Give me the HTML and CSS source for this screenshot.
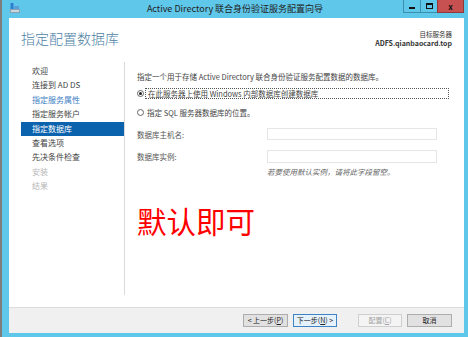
FILE: index.html
```html
<!DOCTYPE html>
<html lang="zh-CN">
<head>
    <meta charset="UTF-8">
    <title>Active Directory 联合身份验证服务配置向导</title>
    <link rel="stylesheet" href="styles.css">
</head>
<body>
    <div class="window">
        <!-- Title bar -->
        <div class="titlebar">
            <div class="tb-left">
                <svg class="app-icon" width="10" height="10" viewBox="0 0 10 10">
                    <rect x="0.5" y="0" width="3" height="7" fill="#2f7fd0"/>
                    <rect x="0" y="6" width="10" height="4" fill="#8aa2b5"/>
                    <rect x="1" y="7" width="8" height="2" fill="#c8d6e0"/>
                    <rect x="4" y="3" width="5" height="3" fill="#5a9fd8"/>
                </svg>
            </div>
            <div class="title">Active Directory 联合身份验证服务配置向导</div>
            <div class="controls">
                <span class="ctl min"><i></i></span>
                <span class="ctl max"><i></i></span>
                <span class="ctl close">x</span>
            </div>
        </div>

        <div class="client">
            <!-- Page header -->
            <div class="page-head">
                <h1>指定配置数据库</h1>
                <div class="target">
                    <div>目标服务器</div>
                    <div class="server">ADFS.qianbaocard.top</div>
                </div>
            </div>

            <div class="page-body">
                <!-- Wizard steps -->
                <ul class="steps">
                    <li>欢迎</li>
                    <li>连接到 AD DS</li>
                    <li class="done">指定服务属性</li>
                    <li>指定服务帐户</li>
                    <li class="current">指定数据库</li>
                    <li>查看选项</li>
                    <li>先决条件检查</li>
                    <li class="off">安装</li>
                    <li class="off">结果</li>
                </ul>

                <div class="content">
                    <p class="intro">指定一个用于存储 Active Directory 联合身份验证服务配置数据的数据库。</p>

                    <div class="option first">
                        <span class="radio checked"></span>
                        <span class="opt-label focus">在此服务器上使用 Windows 内部数据库创建数据库</span>
                    </div>
                    <div class="option second">
                        <span class="radio"></span>
                        <span class="opt-label">指定 SQL 服务器数据库的位置。</span>
                    </div>

                    <div class="field host">
                        <label>数据库主机名:</label>
                        <span class="input"></span>
                    </div>
                    <div class="field inst">
                        <label>数据库实例:</label>
                        <span class="input tall"></span>
                    </div>
                    <p class="hint">若要使用默认实例，请将此字段留空。</p>

                    <p class="note">默认即可</p>
                </div>
            </div>

            <!-- Buttons -->
            <div class="footer">
                <button class="btn">&lt; 上一步(<u>P</u>)</button>
                <button class="btn default">下一步(<u>N</u>) &gt;</button>
                <button class="btn disabled">配置(<u>C</u>)</button>
                <button class="btn">取消</button>
            </div>
        </div>
    </div>
</body>
</html>
```

FILE: styles.css
```css
* {
    margin: 0;
    padding: 0;
    box-sizing: border-box;
}

body {
    width: 468px;
    height: 337px;
    background: #7d7d7d;
    font-family: "Noto Sans CJK SC", sans-serif;
    color: #444;
    overflow: hidden;
}

.window {
    margin-left: 2px;
    height: 337px;
    background: #5fc7ea;
    display: flex;
    flex-direction: column;
}

/* Title bar */
.titlebar {
    height: 18px;
    display: grid;
    grid-template-columns: 1fr auto 1fr;
    align-items: start;
}

.tb-left {
    padding: 3px 0 0 8px;
}

.app-icon {
    display: block;
}

.title {
    font-size: 9px;
    line-height: 17px;
    color: #222;
    white-space: nowrap;
}

.controls {
    display: flex;
    justify-content: flex-end;
    padding-right: 4px;
}

.ctl {
    height: 13px;
    border: 1px solid #3d8fb0;
    border-top: none;
    display: flex;
    align-items: center;
    justify-content: center;
}

.min,
.max {
    width: 17px;
    border-right: none;
}

.min i {
    width: 6px;
    height: 2px;
    background: #111;
    margin-top: 4px;
}

.max i {
    width: 7px;
    height: 6px;
    border: 1px solid #111;
    border-top-width: 2px;
}

.close {
    width: 27px;
    background: #c75050;
    border-color: #8e3a3a;
    font-size: 8px;
    font-weight: 700;
    color: #111;
    line-height: 13px;
}

/* Client area */
.client {
    flex: 1;
    margin: 0 4px 4px 7px;
    background: #fff;
    display: flex;
    flex-direction: column;
}

.page-head {
    height: 44px;
    display: flex;
    justify-content: space-between;
    padding: 10px 12px 0 12px;
}

.page-head h1 {
    font-size: 14px;
    font-weight: 300;
    line-height: 20px;
    color: #4d7fa6;
}

.target {
    padding-top: 2px;
    text-align: right;
    font-size: 6.5px;
    line-height: 9px;
    color: #333;
}

.target .server {
    font-weight: 700;
    font-size: 7px;
}

.page-body {
    flex: 1;
    display: flex;
    padding-bottom: 12px;
}

/* Wizard steps */
.steps {
    list-style: none;
    width: 116px;
    padding: 2px 0 0 12px;
    border-right: 1px solid #dadada;
}

.steps li {
    height: 14.4px;
    line-height: 14px;
    padding-left: 11px;
    font-size: 8px;
    color: #444;
    white-space: nowrap;
}

.steps li.done {
    color: #3c7dc4;
}

.steps li.current {
    background: #0b62ad;
    color: #fff;
    height: 13.6px;
    line-height: 13px;
    margin: 0.4px 0;
}

.steps li.off {
    color: #b8b8b8;
}

/* Main content */
.content {
    flex: 1;
    padding: 9px 15px 0 12px;
    font-size: 7.5px;
    color: #444;
}

.intro {
    line-height: 12px;
    white-space: nowrap;
}

.option {
    display: flex;
    align-items: center;
    height: 10px;
}

.option.first {
    margin-top: 5px;
}

.option.second {
    margin-top: 9px;
}

.radio {
    width: 7px;
    height: 7px;
    border: 1px solid #666;
    border-radius: 50%;
    margin-right: 1px;
    display: flex;
    align-items: center;
    justify-content: center;
    flex-shrink: 0;
}

.radio.checked::after {
    content: "";
    width: 3px;
    height: 3px;
    border-radius: 50%;
    background: #222;
}

.opt-label {
    padding-left: 2px;
    line-height: 9px;
    white-space: nowrap;
}

.opt-label.focus {
    flex: 1;
    border: 1px dotted #555;
}

.field {
    display: flex;
    align-items: center;
}

.field.host {
    margin-top: 11px;
    height: 12px;
}

.field.inst {
    margin-top: 10px;
    height: 13px;
}

.field label {
    width: 130px;
    color: #555;
}

.input {
    width: 170px;
    height: 12px;
    border: 1px solid #e6e6e6;
    background: #fff;
}

.input.tall {
    height: 13px;
}

.hint {
    margin: 4px 0 0 130px;
    line-height: 10px;
    font-style: italic;
    color: #666;
    white-space: nowrap;
}

.note {
    margin-top: 26px;
    font-size: 29.5px;
    line-height: 34px;
    color: #f00;
}

/* Footer buttons */
.footer {
    height: 26px;
    border-top: 1px solid #dcdcdc;
    background: #f0f0f0;
    display: flex;
    justify-content: flex-end;
    align-items: flex-start;
    padding: 6px 12px 0 0;
    gap: 5px;
}

.btn {
    width: 45px;
    height: 13px;
    font-family: inherit;
    font-size: 7px;
    line-height: 11px;
    color: #222;
    background: #e1e1e1;
    border: 1px solid #adadad;
}

.btn u {
    text-decoration: underline;
}

.btn.default {
    width: 44px;
    background: #e5f1fb;
    border-color: #3c84c6;
}

.btn.disabled {
    width: 44px;
    margin-left: 16px;
    color: #a3a3a3;
    background: #f4f4f4;
    border-color: #cfcfcf;
}
```
